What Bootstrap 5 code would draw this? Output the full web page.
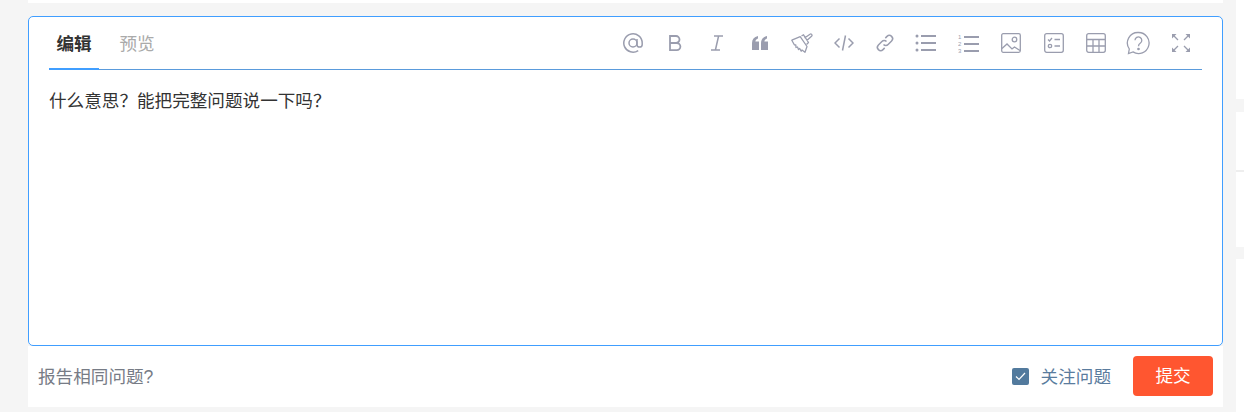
<!DOCTYPE html>
<html lang="zh">
<head>
    <meta charset="UTF-8">
    <title>回答编辑器</title>
    <link href="https://cdn.jsdelivr.net/npm/bootstrap@5.3.2/dist/css/bootstrap.min.css" rel="stylesheet">
    <style>
        body {
            background-color: #f5f5f5;
            height: 412px;
            overflow: hidden;
            font-family: "Liberation Sans", "Noto Sans CJK SC", sans-serif;
            padding-left: 28px;
        }
        .main-col { width: 1195px; }
        .top-strip { height: 3px; margin-bottom: 13px; background: #fff; }
        .side-col { width: 8px; margin-left: 13px; }
        .side-top { height: 99px; margin-bottom: 13px; background: #fff; }
        .side-mid { height: 60px; background: #fff; border-bottom: 2px solid #eee; }
        .side-low { height: 75px; margin-bottom: 12px; background: #fff; }
        .side-end { flex: 1; background: #fff; }
        .editor-box {
            height: 330px;
            border: 1px solid #409eff;
            border-radius: 5px;
            background: #fff;
            padding: 0 20px;
        }
        .editor-head {
            height: 53px;
            border-bottom: 1px solid #5a9bdc;
        }
        .tab-item {
            width: 50px;
            height: 53px;
            line-height: 54px;
            text-align: center;
            font-size: 17.6px;
            color: #aaa;
            margin-right: 13px;
        }
        .tab-item.active {
            color: #333;
            font-weight: 700;
            border-bottom: 2px solid #409eff;
        }
        .tool-btn {
            width: 42.4px;
            height: 52px;
            color: #9a9dae;
            flex: none;
        }
        .tool-btn.slim { width: 41px; }
        .tool-btn svg { display: block; }
        .num-mark { font-size: 6px; fill: currentColor; font-family: "Liberation Sans", sans-serif; }
        .editor-text {
            margin: 20px 0 0;
            font-size: 17.6px;
            line-height: 22px;
            color: #333;
        }
        .foot-bar {
            height: 61px;
            background: #fff;
            padding: 0 10px 1px;
        }
        .same-link { color: #777c86; font-size: 17.6px; padding-top: 2px; }
        .check-mark {
            width: 17px;
            height: 17px;
            background: #527a9d;
            border-radius: 2px;
            margin-right: 12px;
            margin-top: 1px;
        }
        .follow-label { color: #5a7c9e; font-size: 17.6px; margin-right: 22px; padding-top: 2px; }
        .btn-submit {
            width: 80px;
            height: 40px;
            padding: 0;
            background: #ff5630;
            border: 0;
            border-radius: 4px;
            color: #fff;
            font-size: 17.6px;
        }
    </style>
</head>
<body class="d-flex">

<div class="main-col">
    <div class="top-strip"></div>
    <div class="editor-box">
        <div class="editor-head d-flex justify-content-between">
            <div class="d-flex">
                <div class="tab-item active">编辑</div>
                <div class="tab-item">预览</div>
            </div>
            <div class="d-flex">
                <div class="tool-btn d-flex align-items-center justify-content-center">
                    <svg width="22" height="22" viewBox="0 0 22 22" fill="none" stroke="currentColor" stroke-width="1.5"><circle cx="11" cy="11" r="4"/><path d="M15 7v5.500a2.600 2.600 0 0 0 5.200 0V11a9.200 9.200 0 1 0-4 7.600"/></svg>
                </div>
                <div class="tool-btn d-flex align-items-center justify-content-center">
                    <svg width="22" height="22" viewBox="0 0 22 22" fill="none" stroke="currentColor" stroke-width="1.800"><path d="M6 4h6a3.400 3.400 0 0 1 0 7H6zM6 11h6.800a3.600 3.600 0 0 1 0 7.200H6z"/></svg>
                </div>
                <div class="tool-btn d-flex align-items-center justify-content-center">
                    <svg width="22" height="22" viewBox="0 0 22 22" fill="none" stroke="currentColor" stroke-width="1.500"><path d="M8 4h9M5 18h9M12.600 4 9.400 18"/></svg>
                </div>
                <div class="tool-btn d-flex align-items-center justify-content-center">
                    <svg width="16" height="14" viewBox="0 0 16 14" fill="currentColor"><path d="M0 7C0 3.500 2 1 6 0v2.600C4.500 3.200 3.500 4.200 3.400 5.600H7V14H0zM9 7c0-3.500 2-6 6-7v2.600c-1.500.6-2.500 1.600-2.600 3H16V14H9z"/></svg>
                </div>
                <div class="tool-btn d-flex align-items-center justify-content-center">
                    <svg width="22" height="20" viewBox="0 0 22 20" fill="none" stroke="currentColor" stroke-width="1.300" stroke-linejoin="round"><path d="M.8 7.200 9.200 3.600 16 13.500 14 19.300l-3-2.300-.8 1.200-1.500-2.700-1.200 1-1-2.500-1.500.5-.2-2.500-1.500-.2z"/><path d="M10.500 3 12.500 1.800 17.500 9.500 15.500 11.500M13.500 5 19 1.200a1.300 1.300 0 0 1 1.800 1.800L15.800 7.500"/></svg>
                </div>
                <div class="tool-btn slim d-flex align-items-center justify-content-center">
                    <svg width="20" height="18" viewBox="0 0 20 18" fill="none" stroke="currentColor" stroke-width="1.500"><path d="M5.500 4.500 1 9l4.500 4.500M14.500 4.500 19 9l-4.500 4.500M11.500 1.500l-3 15"/></svg>
                </div>
                <div class="tool-btn slim d-flex align-items-center justify-content-center">
                    <svg width="20" height="20" viewBox="0 0 20 20" fill="none" stroke="currentColor" stroke-width="1.500"><path d="M8.500 11.500a3.200 3.200 0 0 0 4.600 0l3.500-3.500a3.200 3.200 0 0 0-4.600-4.600l-1.700 1.700"/><path d="M11.500 8.500a3.200 3.200 0 0 0-4.600 0l-3.500 3.500a3.200 3.200 0 0 0 4.600 4.600l1.700-1.700"/></svg>
                </div>
                <div class="tool-btn d-flex align-items-center justify-content-center">
                    <svg width="22" height="18" viewBox="0 0 22 18" fill="currentColor"><circle cx="2" cy="2" r="1.500"/><circle cx="2" cy="9" r="1.500"/><circle cx="2" cy="16" r="1.500"/><path d="M6 1h15v2H6zM6 8h15v2H6zM6 15h15v2H6z"/></svg>
                </div>
                <div class="tool-btn d-flex align-items-center justify-content-center">
                    <svg width="22" height="20" viewBox="0 0 22 20" fill="currentColor"><path d="M6 3h15v2H6zM6 10h15v2H6zM6 17h15v2H6z"/><text class="num-mark" x="0" y="6">1</text><text class="num-mark" x="0" y="13">2</text><text class="num-mark" x="0" y="20">3</text></svg>
                </div>
                <div class="tool-btn d-flex align-items-center justify-content-center">
                    <svg width="20" height="20" viewBox="0 0 20 20" fill="none" stroke="currentColor" stroke-width="1.300"><rect x=".7" y=".7" width="18.600" height="18.600" rx="1.500"/><circle cx="13.500" cy="6.500" r="2.300"/><path d="M1 15.500 6 11l5 5 2.500-2 5.500 3.500"/></svg>
                </div>
                <div class="tool-btn d-flex align-items-center justify-content-center">
                    <svg width="20" height="20" viewBox="0 0 20 20" fill="none" stroke="currentColor" stroke-width="1.300"><rect x=".7" y=".7" width="18.600" height="18.600" rx="2"/><path d="M4 6.500 5.500 8 8 5M10.500 6.500H16M10.500 13H16"/><circle cx="6" cy="13" r="1.700"/></svg>
                </div>
                <div class="tool-btn d-flex align-items-center justify-content-center">
                    <svg width="20" height="20" viewBox="0 0 20 20" fill="none" stroke="currentColor" stroke-width="1.300"><rect x=".7" y=".7" width="18.600" height="18.600" rx="2"/><path d="M1 6.500h18M1 13h18M7 6.500V19M13 6.500V19"/></svg>
                </div>
                <div class="tool-btn d-flex align-items-center justify-content-center">
                    <svg width="24" height="24" viewBox="0 0 24 24" fill="none" stroke="currentColor" stroke-width="1.300"><path d="M12.500 1.500a10.500 10.500 0 1 1-5.500 19.400L2.500 22.500l.8-4.500A10.500 10.500 0 0 1 12.500 1.500z"/><path d="M9 9.300a3.400 3.400 0 1 1 5.200 2.900c-1.200.8-1.700 1.400-1.700 3"/><circle cx="12.500" cy="18" r=".7" fill="currentColor"/></svg>
                </div>
                <div class="tool-btn d-flex align-items-center justify-content-center">
                    <svg width="18" height="18" viewBox="0 0 18 18" fill="none" stroke="currentColor" stroke-width="1.300"><path d="M2 2l4 4M16 2l-4 4M2 16l4-4M16 16l-4-4"/><path fill="currentColor" stroke="none" d="M0 0h4.500L0 4.500zM18 0v4.500L13.500 0zM0 18v-4.500L4.500 18zM18 18h-4.500L18 13.500z"/></svg>
                </div>
            </div>
        </div>
        <p class="editor-text">什么意思？能把完整问题说一下吗？</p>
    </div>
    <div class="foot-bar d-flex align-items-center justify-content-between">
        <span class="same-link">报告相同问题?</span>
        <div class="d-flex align-items-center">
            <span class="check-mark d-flex align-items-center justify-content-center">
                <svg width="11" height="9" viewBox="0 0 11 9" fill="none" stroke="#fff" stroke-width="1.200"><path d="M1 4.500 4 7.500 10 1"/></svg>
            </span>
            <span class="follow-label">关注问题</span>
            <button type="button" class="btn btn-submit">提交</button>
        </div>
    </div>
</div>

<div class="side-col d-flex flex-column">
    <div class="side-top"></div>
    <div class="side-mid"></div>
    <div class="side-low"></div>
    <div class="side-end"></div>
</div>

</body>
</html>
